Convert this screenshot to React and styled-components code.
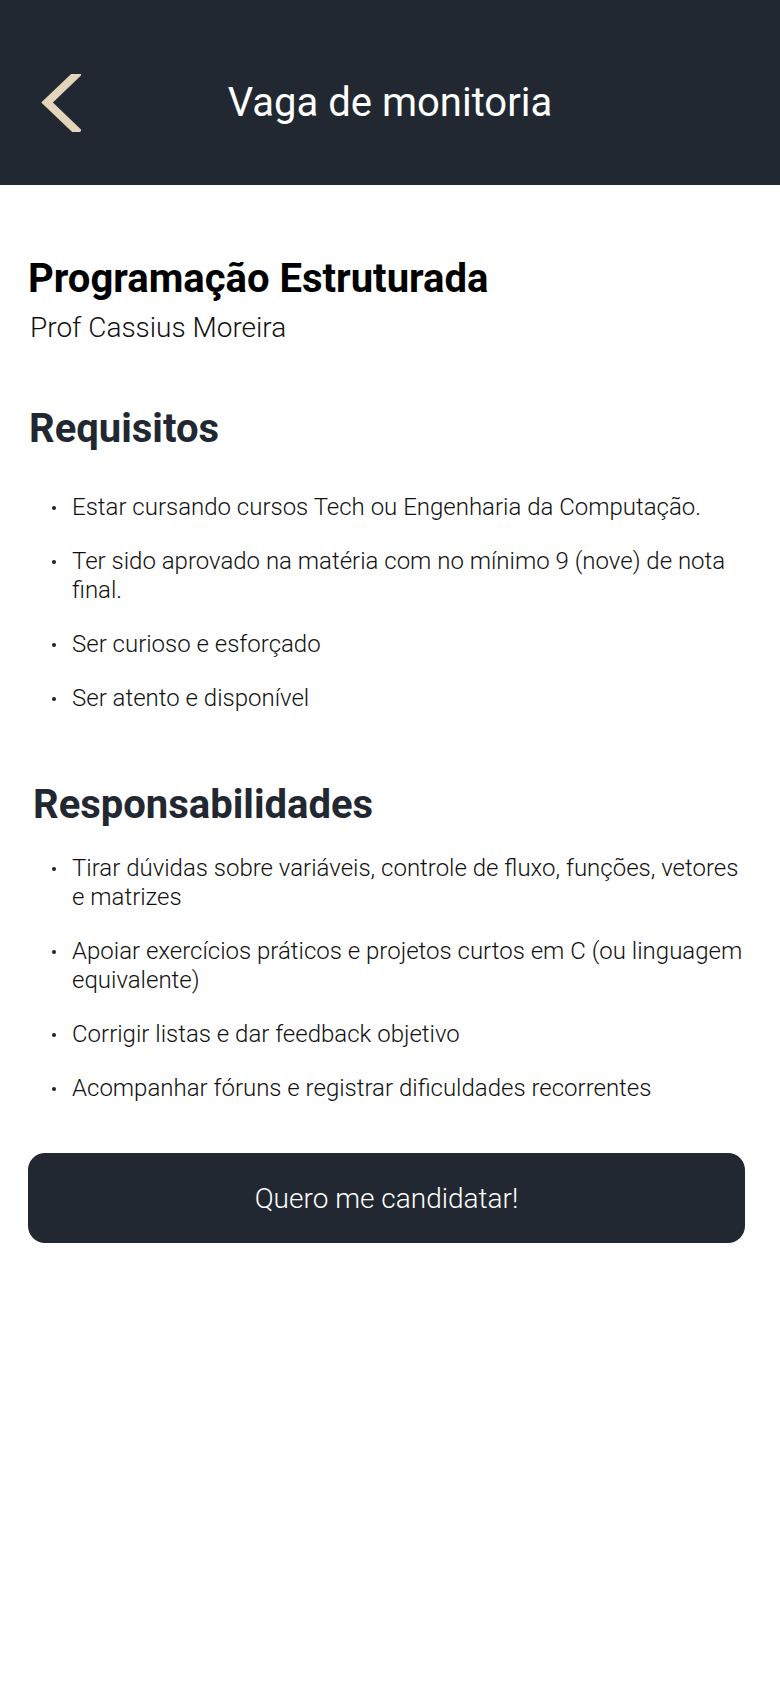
import React from 'react';
import styled, { createGlobalStyle } from 'styled-components';

const requisitos = [
  'Estar cursando cursos Tech ou Engenharia da Computação.',
  'Ter sido aprovado na matéria com no mínimo 9 (nove) de nota final.',
  'Ser curioso e esforçado',
  'Ser atento e disponível',
];

const responsabilidades = [
  'Tirar dúvidas sobre variáveis, controle de fluxo, funções, vetores e matrizes',
  'Apoiar exercícios práticos e projetos curtos em C (ou linguagem equivalente)',
  'Corrigir listas e dar feedback objetivo',
  'Acompanhar fóruns e registrar dificuldades recorrentes',
];

const App = () => {
  return (
    <>
      <GlobalStyle />
      <Page>
        <Header>
          <BackButton aria-label="Voltar">
            <svg width="40" height="58" viewBox="0 0 40 58">
              <polyline points="38,-2 6,28.5 38,59" fill="none" stroke="#e2d5ba" strokeWidth="8" />
            </svg>
          </BackButton>
          <HeaderTitle>Vaga de monitoria</HeaderTitle>
          <span />
        </Header>

        <Content>
          <CourseTitle>Programação Estruturada</CourseTitle>
          <Professor>Prof Cassius Moreira</Professor>

          <SectionTitle>Requisitos</SectionTitle>
          <List>
            {requisitos.map(item => (
              <Item key={item}>{item}</Item>
            ))}
          </List>

          <SectionTitle $offset={5} $gap={68}>
            Responsabilidades
          </SectionTitle>
          <List $gap={25}>
            {responsabilidades.map(item => (
              <Item key={item}>{item}</Item>
            ))}
          </List>

          <ApplyButton>Quero me candidatar!</ApplyButton>
        </Content>
      </Page>
    </>
  );
};

const GlobalStyle = createGlobalStyle`
  body {
    margin: 0;
    background: #fff;
    font-family: Roboto, 'Liberation Sans', sans-serif;
  }
`;

const Page = styled.div`
  min-height: 1688px;
  background: #fff;
`;

const Header = styled.header`
  box-sizing: border-box;
  height: 185px;
  padding-top: 20px;
  background: #222831;
  display: grid;
  grid-template-columns: 1fr auto 1fr;
  align-items: center;
`;

const BackButton = styled.button`
  justify-self: start;
  margin-left: 41px;
  padding: 0;
  border: 0;
  background: none;
  display: flex;
  cursor: pointer;
  svg {
    display: block;
  }
`;

const HeaderTitle = styled.h1`
  margin: 0;
  color: #fff;
  font-size: 40px;
  font-weight: 400;
  line-height: 48px;
`;

const Content = styled.main`
  padding: 70px 35px 0 28px;
  display: flex;
  flex-direction: column;
`;

const CourseTitle = styled.h2`
  margin: 0;
  color: #000;
  font-size: 40px;
  font-weight: 700;
  line-height: 48px;
`;

const Professor = styled.p`
  margin: 9px 0 0 2px;
  color: #111;
  font-size: 28px;
  font-weight: 300;
  line-height: 32px;
`;

const SectionTitle = styled.h3`
  margin: ${({ $gap = 61 }) => $gap}px 0 0 ${({ $offset = 1 }) => $offset}px;
  color: #222831;
  font-size: 40px;
  font-weight: 700;
  line-height: 48px;
`;

const List = styled.ul`
  margin: ${({ $gap = 40 }) => $gap}px 0 0;
  padding: 0 0 0 44px;
  display: flex;
  flex-direction: column;
  gap: 25px;
`;

const Item = styled.li`
  color: #111;
  font-size: 24px;
  font-weight: 300;
  line-height: 29px;
  list-style: none;
  position: relative;
  &::before {
    content: '';
    position: absolute;
    left: -20px;
    top: 13px;
    width: 4px;
    height: 4px;
    border-radius: 50%;
    background: #222;
  }
`;

const ApplyButton = styled.button`
  margin-top: 50px;
  height: 90px;
  border: 0;
  border-radius: 17px;
  background: #222831;
  color: #fff;
  font-family: Roboto, 'Liberation Sans', sans-serif;
  font-size: 28px;
  font-weight: 300;
  cursor: pointer;
`;

export default App;
